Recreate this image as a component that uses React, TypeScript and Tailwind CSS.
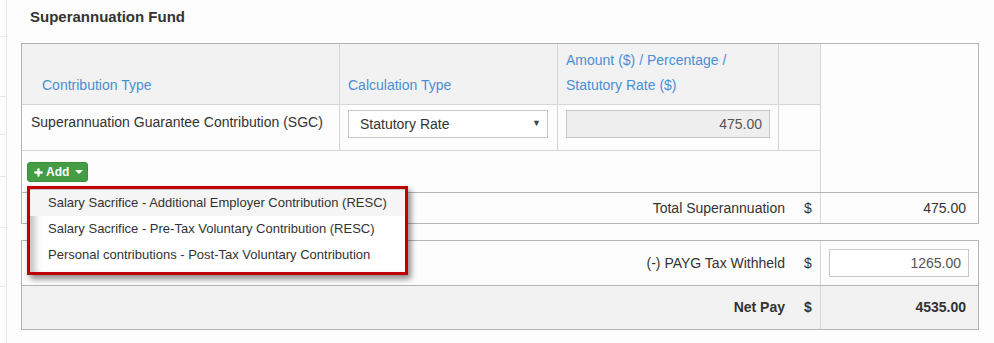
import { Plus } from "lucide-react";

const FONT = "font-['Liberation_Sans',Arial,sans-serif]";

const MENU_ITEMS = [
  "Salary Sacrifice - Additional Employer Contribution (RESC)",
  "Salary Sacrifice - Pre-Tax Voluntary Contribution (RESC)",
  "Personal contributions - Post-Tax Voluntary Contribution",
];

export default function App() {
  return (
    <div className={`${FONT} flex w-[994px] h-[343px] bg-[#fdfdfd] text-[14px] text-[#333] overflow-hidden`}>
      {/* Left edge strip */}
      <aside className="w-[7px] flex-shrink-0 flex flex-col border-r border-[#e8e8e8]">
        <div className="h-[37px] border-b border-[#e8e8e8]" />
        <div className="h-[60px] border-b border-[#e8e8e8]" />
        <div className="h-[38px] border-b border-[#e8e8e8]" />
        <div className="h-[42px] border-b border-[#e8e8e8]" />
        <div className="h-[51px] border-b border-[#e8e8e8]" />
        <div className="h-[59px] border-b border-[#e8e8e8]" />
      </aside>

      <main className="relative flex-1 pl-[14px]">
        <h2 className="pt-[7px] pl-[9px] h-[43px] leading-[20px] font-bold text-[15px] text-[#333]">
          Superannuation Fund
        </h2>

        {/* Contributions table */}
        <div className="w-[958px] border border-[#b5b5b5]">
          <div className="flex">
            <div className="w-[798px] flex-shrink-0">
              {/* Header */}
              <div className="flex h-[60px] bg-[#f2f2f2] text-[#4a8fd6] leading-[25px]">
                <div className="w-[317px] flex items-end pl-[20px] pb-[6px]">Contribution Type</div>
                <div className="w-[218px] flex items-end pl-[8px] pb-[6px] border-l border-[#d6d6d6]">Calculation Type</div>
                <div className="w-[221px] flex items-end pl-[8px] pb-[6px] border-l border-[#d6d6d6]">
                  <span>
                    Amount ($) / Percentage /
                    <br />
                    Statutory Rate ($)
                  </span>
                </div>
                <div className="w-[42px] border-l border-[#d6d6d6]" />
              </div>

              {/* SGC row */}
              <div className="flex h-[46px] border-t border-[#d6d6d6]">
                <div className="w-[317px] pl-[9px] pt-[7px] leading-[20px]">
                  Superannuation Guarantee Contribution (SGC)
                </div>
                <div className="w-[218px] pl-[8px] pt-[5px] border-l border-[#d6d6d6]">
                  <div className="w-[200px] h-[28px] flex items-center justify-between pl-[11px] pr-[6px] border border-[#c8c8c8] bg-white">
                    <span>Statutory Rate</span>
                    <span className="text-[9px] text-[#444]">▼</span>
                  </div>
                </div>
                <div className="w-[221px] pl-[8px] pt-[5px] border-l border-[#d6d6d6]">
                  <div className="w-[204px] h-[28px] flex items-center justify-end pr-[7px] border border-[#c8c8c8] bg-[#eeeeee] text-[#555]">
                    475.00
                  </div>
                </div>
                <div className="w-[42px] border-l border-[#d6d6d6]" />
              </div>

              {/* Add row */}
              <div className="h-[42px] border-t border-[#d6d6d6] pl-[5px] pt-[11px]">
                <button className="w-[61px] h-[20px] flex items-center pl-[5px] rounded-[3px] bg-[#449d44] border border-[#3d8f3d] text-white text-[12px] font-bold">
                  <Plus className="w-[11px] h-[11px]" strokeWidth={5} />
                  <span className="ml-[2px]">Add</span>
                  <span className="ml-[6px] w-0 h-0 border-x-[4px] border-x-transparent border-t-[4px] border-t-white" />
                </button>
              </div>
            </div>
            <div className="flex-1 border-l border-[#d6d6d6]" />
          </div>

          {/* Total row */}
          <div className="flex h-[31px] border-t border-[#b5b5b5]">
            <div className="w-[798px] flex items-center justify-end">
              <span>Total Superannuation</span>
              <span className="w-[27px] pl-[19px] text-left">$</span>
              <span className="w-[8px]" />
            </div>
            <div className="flex-1 flex items-center justify-end pr-[12px] border-l border-[#d6d6d6]">475.00</div>
          </div>
        </div>

        {/* Pay table */}
        <div className="mt-[16px] w-[958px] border border-[#b5b5b5]">
          <div className="flex h-[44px]">
            <div className="w-[798px] flex items-center justify-end">
              <span>(-) PAYG Tax Withheld</span>
              <span className="w-[27px] pl-[19px] text-left">$</span>
              <span className="w-[8px]" />
            </div>
            <div className="flex-1 pl-[8px] flex items-center border-l border-[#d6d6d6]">
              <div className="w-[140px] h-[28px] flex items-center justify-end pr-[7px] border border-[#c8c8c8] bg-white text-[#555]">
                1265.00
              </div>
            </div>
          </div>
          <div className="flex h-[44px] bg-[#f2f2f2] border-t border-[#b5b5b5] font-bold">
            <div className="w-[798px] flex items-center justify-end">
              <span>Net Pay</span>
              <span className="w-[27px] pl-[19px] text-left">$</span>
              <span className="w-[8px]" />
            </div>
            <div className="flex-1 flex items-center justify-end pr-[12px] border-l border-[#d6d6d6]">4535.00</div>
          </div>
        </div>

        {/* Add dropdown menu (highlighted) */}
        <div className="absolute left-[20px] top-[186px] w-[381px] h-[89px] border-[3px] border-[#c00000] bg-white shadow-[3px_4px_6px_rgba(0,0,0,0.45)]">
          <div className="h-full pt-[1px] shadow-[inset_5px_4px_7px_rgba(0,0,0,0.25)] text-[13px] text-[#333]">
            {MENU_ITEMS.map((item, i) => (
              <div
                key={item}
                className={`h-[26px] flex items-center pl-[18px] ${i === 0 ? "bg-[#f5f5f5]" : ""}`}
              >
                {item}
              </div>
            ))}
          </div>
        </div>
      </main>
    </div>
  );
}
